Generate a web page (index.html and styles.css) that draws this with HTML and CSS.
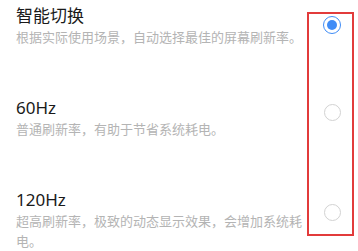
FILE: index.html
```html
<!DOCTYPE html>
<html lang="zh">
<head>
<meta charset="utf-8">
<link rel="stylesheet" href="styles.css">
</head>
<body>
<div class="list">
  <div class="row row-first">
    <div class="text">
      <div class="title">智能切换</div>
      <div class="sub">根据实际使用场景，自动选择最佳的屏幕刷新率。</div>
    </div>
    <span class="radio checked"></span>
  </div>
  <div class="row">
    <div class="text">
      <div class="title">60Hz</div>
      <div class="sub">普通刷新率，有助于节省系统耗电。</div>
    </div>
    <span class="radio"></span>
  </div>
  <div class="row row-tall">
    <div class="text">
      <div class="title">120Hz</div>
      <div class="sub">超高刷新率，极致的动态显示效果，会增加系统耗电。</div>
    </div>
    <span class="radio"></span>
  </div>
  <div class="highlight"></div>
</div>
</body>
</html>
```

FILE: styles.css
```css
html, body {
  margin: 0;
  padding: 0;
  background: #ffffff;
}
body {
  font-family: "Noto Sans", "Noto Sans CJK SC", sans-serif;
}
.list {
  position: relative;
  width: 358px;
  height: 251px;
  padding: 5px 17px 0 16px;
  box-sizing: border-box;
  display: flex;
  flex-direction: column;
  gap: 50px;
}
.row {
  display: flex;
  justify-content: space-between;
  align-items: flex-start;
}
.text {
  width: 290px;
}
.title {
  font-size: 17px;
  line-height: 22px;
  color: #1a1a1a;
}
.sub {
  font-size: 13px;
  line-height: 20px;
  color: #b4b4b4;
}
.radio {
  width: 17px;
  height: 17px;
  box-sizing: border-box;
  border: 1.5px solid #d2d2d2;
  border-radius: 50%;
  margin-top: 7px;
  display: flex;
  align-items: center;
  justify-content: center;
}
.row-first .radio {
  margin-top: 11px;
}
.row-tall .radio {
  margin-top: 15px;
}
.radio.checked {
  width: 18px;
  height: 18px;
  border-color: #3f8cf6;
}
.radio.checked::after {
  content: "";
  width: 10px;
  height: 10px;
  border-radius: 50%;
  background: #3f8cf6;
}
.highlight {
  position: absolute;
  left: 307px;
  top: 12px;
  width: 47px;
  height: 224px;
  box-sizing: border-box;
  border: 2.5px solid #e23b3b;
}
```
